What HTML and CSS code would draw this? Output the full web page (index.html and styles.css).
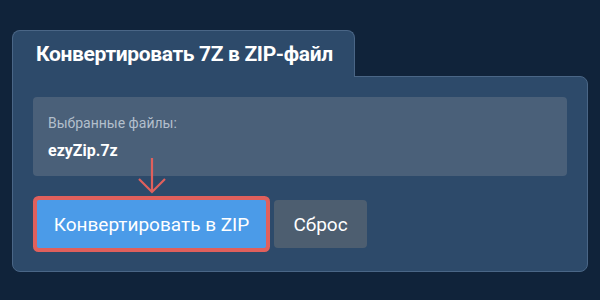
FILE: index.html
```html
<!DOCTYPE html>
<html lang="ru">
<head>
  <meta charset="UTF-8" />
  <title>Конвертировать 7Z в ZIP</title>
  <link rel="stylesheet" href="styles.css">
</head>
<body>
  <div class="converter">
    <div class="tab">Конвертировать 7Z в ZIP-файл</div>
    <div class="panel">
      <div class="files">
        <div class="files-label">Выбранные файлы:</div>
        <div class="files-name">ezyZip.7z</div>
      </div>
      <div class="actions">
        <button class="btn btn-primary">Конвертировать в ZIP</button>
        <button class="btn btn-reset">Сброс</button>
        <!-- pointer annotation -->
        <svg class="pointer" width="30" height="36" viewBox="0 0 30 36">
          <path d="M15 0 V34 M2 21 L15 34 L28 21" fill="none" stroke="#e0605c" stroke-width="2.2"/>
        </svg>
      </div>
    </div>
  </div>
</body>
</html>
```

FILE: styles.css
```css
:root {
  --bg:#10233a;
  --panel:#2d4a6a;
  --line:#4a6686;
  --box:#4a6079;
  --blue:#4b9be8;
  --red:#e0605c;
  font-family: Roboto, "Noto Sans", sans-serif;
}
*{box-sizing:border-box;}
body {
  margin:0;
  background: var(--bg);
  color:#fff;
  padding:30px 12px 0;
}
.converter {display:flex; flex-direction:column; align-items:flex-start;}
.tab {
  position:relative;
  z-index:1;
  width:343px;
  height:47px;
  margin-bottom:-1px;
  background: var(--panel);
  border:1px solid var(--line);
  border-bottom:none;
  border-radius:8px 8px 0 0;
  padding:11px 0 0 23px;
  font-size:21px;
  font-weight:700;
  letter-spacing:-.35px;
}
.panel {
  width:100%;
  height:196px;
  background: var(--panel);
  border:1px solid var(--line);
  border-radius:0 8px 8px 8px;
  padding:20px 20px 0;
}
.files {
  height:79px;
  background: var(--box);
  border-radius:4px;
  padding:17px 15px 0;
}
.files-label {font-size:14px; color:#b3bfcc; line-height:18px;}
.files-name {font-size:16px; font-weight:700; margin-top:9px; line-height:20px;}
.actions {
  position:relative;
  display:flex;
  gap:8px;
  margin-top:24px;
  padding-left:4px;
}
.btn {
  height:48px;
  border:none;
  border-radius:4px;
  color:#fff;
  font-family:inherit;
  font-size:19px;
  padding:0;
}
.btn-primary {
  width:229px;
  background: var(--blue);
  box-shadow:0 0 0 4px var(--red);
  border-radius:2px;
}
.btn-reset {width:93px; background:#4d5e70;}
.pointer {
  position:absolute;
  left:104px;
  top:-42px;
}
```
